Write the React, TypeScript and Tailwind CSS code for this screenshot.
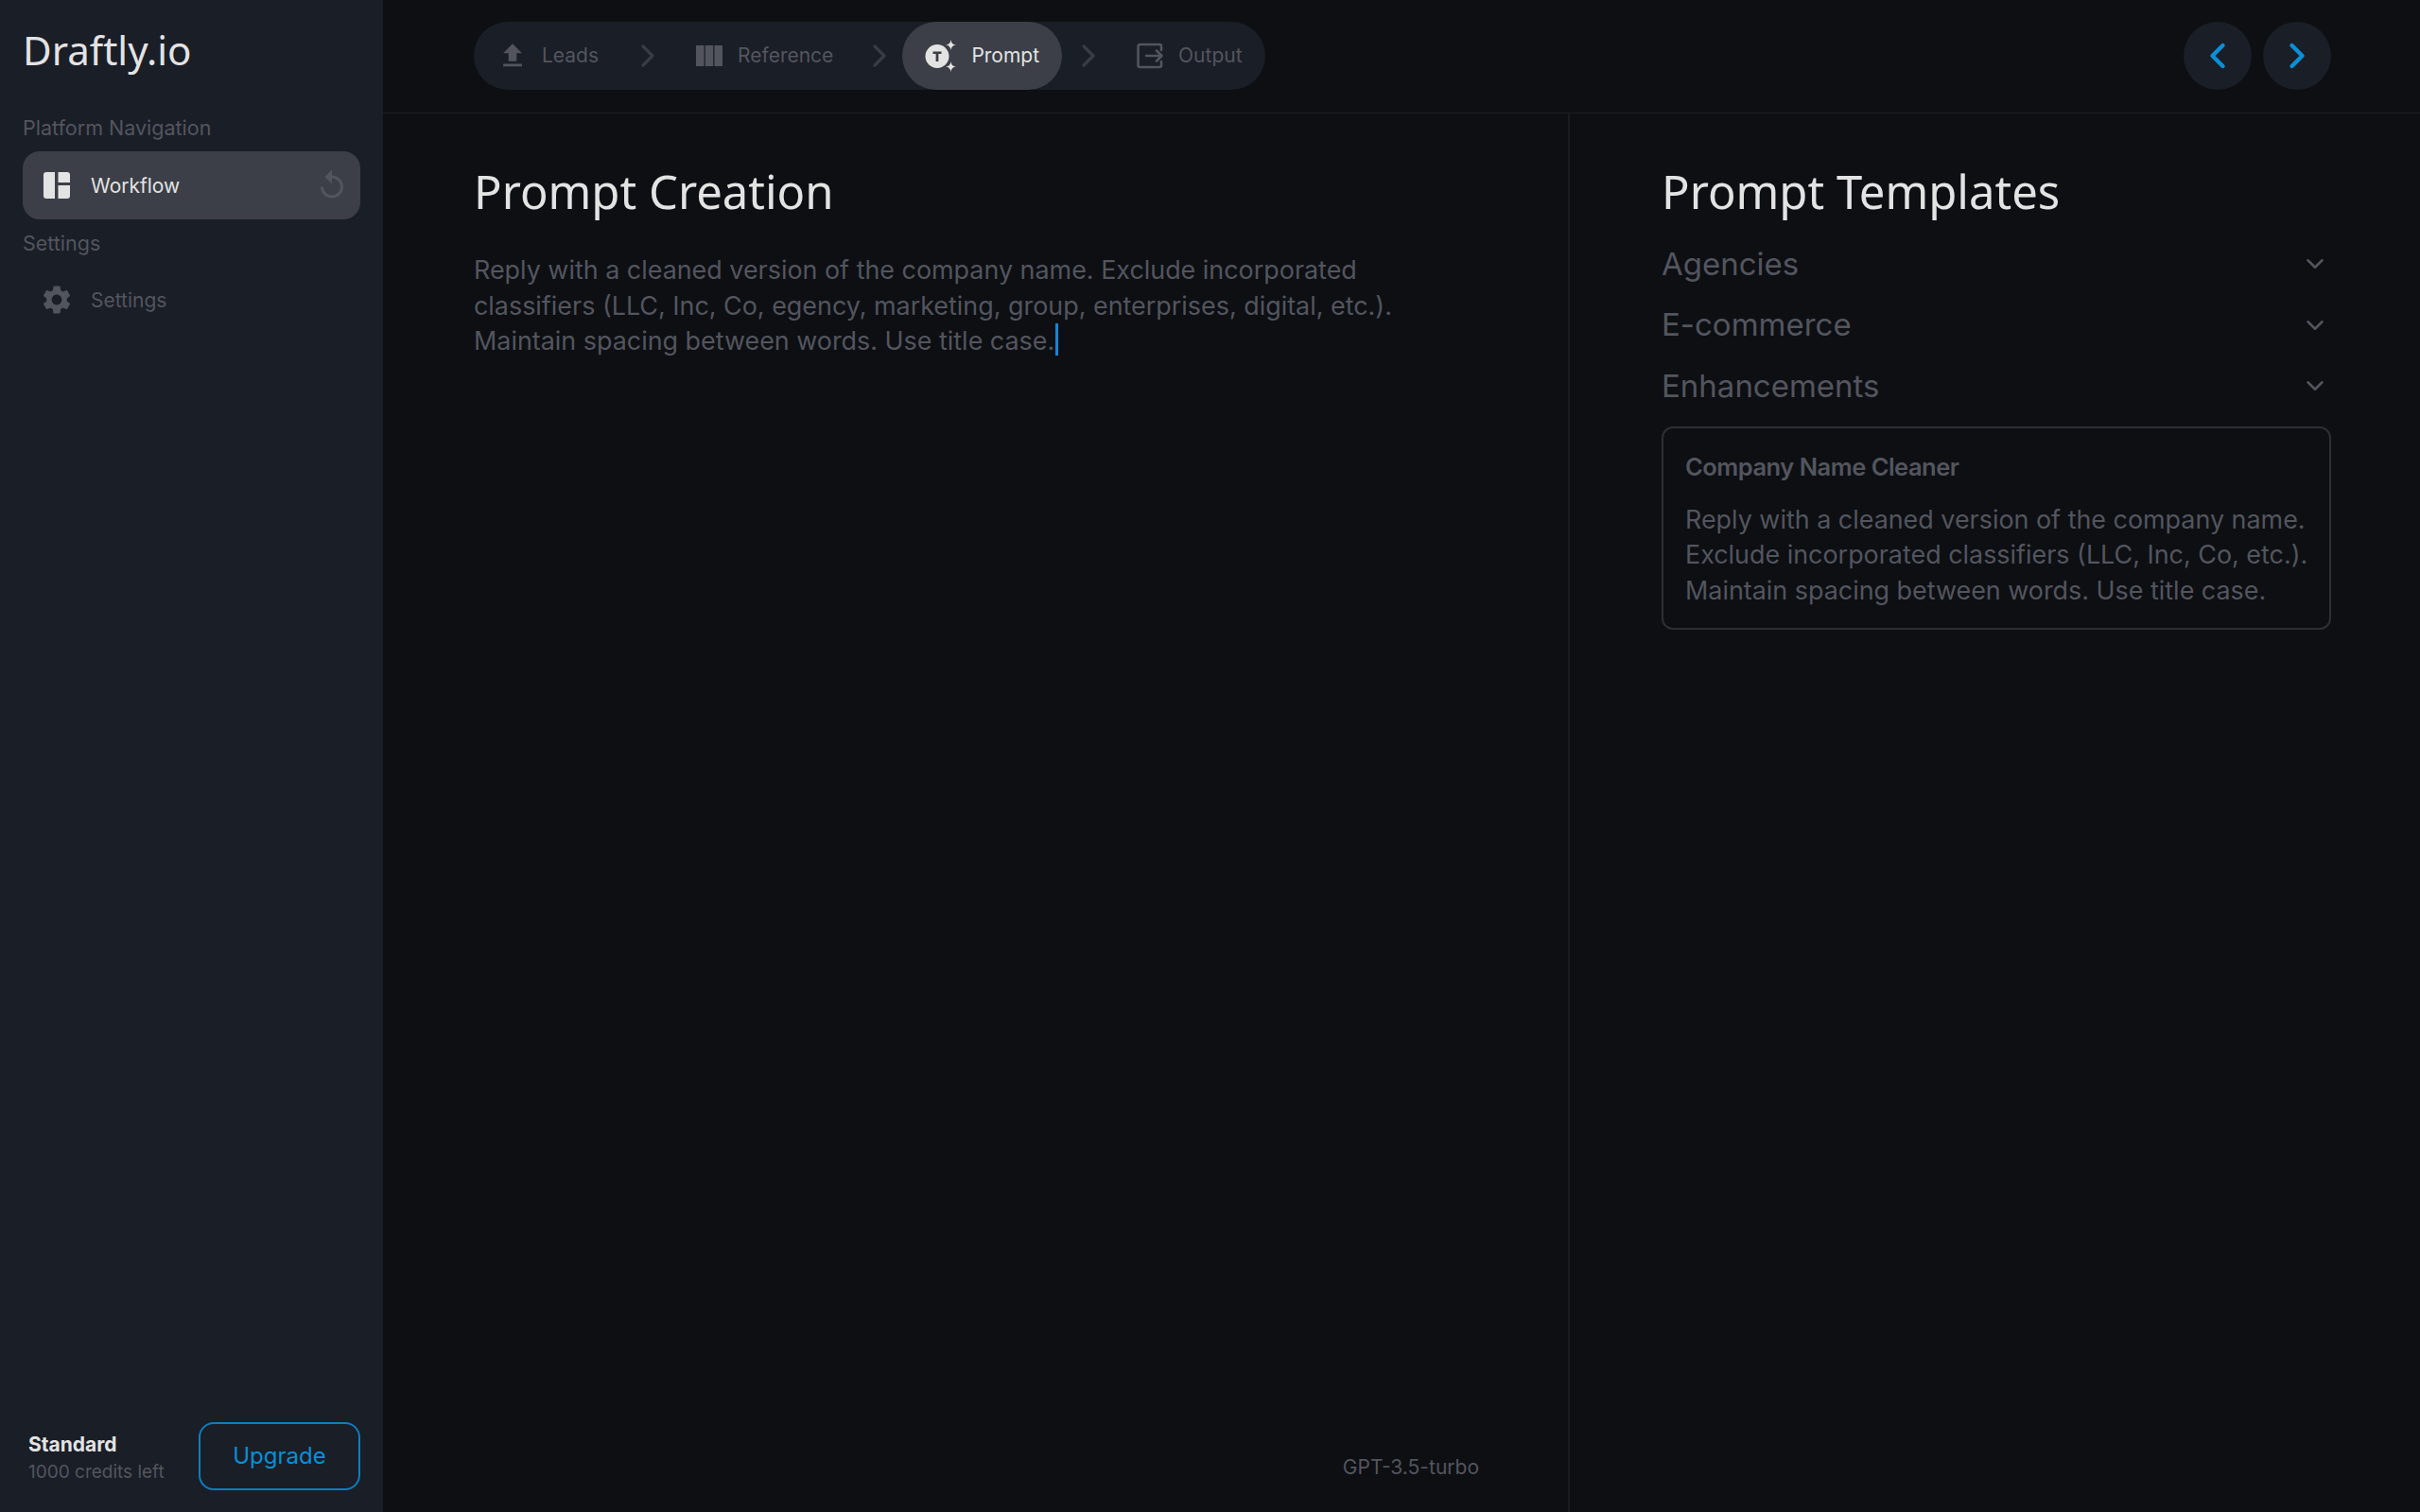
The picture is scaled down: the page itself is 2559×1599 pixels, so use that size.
import { ChevronDown, ChevronLeft, ChevronRight } from 'lucide-react'
import type { ReactNode } from 'react'

const INTER = "font-['Inter',sans-serif]"
const NOTO = "font-['Noto_Sans',sans-serif]"

function UploadIcon() {
  return (
    <svg viewBox="0 0 24 24" className="-mr-[2px] h-[34px] w-[34px]" fill="currentColor">
      <path d="M9 16h6v-6h4l-7-7-7 7h4zm-4 2h14v2H5z" />
    </svg>
  )
}

function ColumnsIcon() {
  return (
    <svg viewBox="0 0 28 22" className="h-[22px] w-[28px]" fill="currentColor">
      <rect x="0" y="0" width="8.5" height="22" rx="0.5" />
      <rect x="9.75" y="0" width="8.5" height="22" rx="0.5" />
      <rect x="19.5" y="0" width="8.5" height="22" rx="0.5" />
    </svg>
  )
}

function PromptIcon() {
  return (
    <svg viewBox="0 0 36 36" className="h-[36px] w-[36px]" fill="#e3e3e3">
      <circle cx="13" cy="18.5" r="12.5" />
      <path d="M27.5 1c.6 3.6 2 5 5.5 5.500-3.500.6-4.900 2-5.500 5.500-.6-3.500-2-4.900-5.500-5.500 3.500-.5 4.900-1.900 5.500-5.500z" />
      <path d="M27.500 24c.6 3.600 2 5 5.500 5.500-3.500.6-4.900 2-5.500 5.500-.6-3.500-2-4.900-5.500-5.500 3.500-.5 4.900-1.900 5.500-5.500z" />
      <path d="M8.500 13.500h9v2.600h-3.100v8h-2.800v-8H8.500z" fill="#3c3f47" />
    </svg>
  )
}

function OutputIcon() {
  return (
    <svg viewBox="0 0 28 28" className="h-[28px] w-[28px]" fill="none" stroke="currentColor" strokeWidth="2.600" strokeLinecap="round" strokeLinejoin="round">
      <path d="M26 8V4a2 2 0 0 0-2-2H3.500a2 2 0 0 0-2 2v20a2 2 0 0 0 2 2H24a2 2 0 0 0 2-2v-4" />
      <path d="M10 14h16M21 8.500l5.500 5.500-5.500 5.500" />
    </svg>
  )
}

function DashboardIcon() {
  return (
    <svg viewBox="0 0 28 28" className="h-[28px] w-[28px]" fill="#e3e3e3">
      <path d="M3 0h9v28H3a3 3 0 0 1-3-3V3a3 3 0 0 1 3-3z" />
      <path d="M15.500 0H25a3 3 0 0 1 3 3v8H15.500z" />
      <path d="M15.500 14H28v11a3 3 0 0 1-3 3h-9.500z" />
    </svg>
  )
}

function ReplayIcon() {
  return (
    <svg viewBox="0 0 24 24" className="h-[36px] w-[36px]" fill="#53555e">
      <path d="M12 5V1L7 6l5 5V7c3.310 0 6 2.690 6 6s-2.690 6-6 6-6-2.690-6-6H4c0 4.420 3.580 8 8 8s8-3.580 8-8-3.580-8-8-8z" />
    </svg>
  )
}

function GearIcon() {
  return (
    <svg viewBox="0 0 24 24" className="h-[36px] w-[36px]" fill="#53555e">
      <path d="M19.140 12.940c.04-.3.060-.61.060-.94 0-.32-.02-.64-.07-.94l2.030-1.580c.18-.14.230-.41.120-.61l-1.920-3.320c-.12-.22-.37-.29-.59-.22l-2.390.96c-.5-.38-1.030-.7-1.620-.94l-.36-2.540c-.04-.24-.24-.41-.48-.41h-3.840c-.24 0-.43.170-.47.410l-.36 2.540c-.59.240-1.130.570-1.620.940l-2.390-.96c-.22-.08-.47 0-.59.220L2.740 8.870c-.12.210-.08.470.12.610l2.030 1.580c-.05.300-.09.630-.09.940s.02.640.07.940l-2.030 1.580c-.18.140-.23.410-.12.610l1.920 3.320c.12.220.37.290.59.220l2.390-.96c.5.380 1.030.7 1.620.94l.36 2.540c.05.240.24.410.48.410h3.840c.24 0 .44-.17.470-.41l.36-2.540c.59-.24 1.130-.56 1.620-.94l2.390.96c.22.080.47 0 .59-.22l1.920-3.320c.12-.22.070-.47-.12-.61l-2.010-1.580zM12 15.600c-1.980 0-3.600-1.620-3.600-3.600s1.620-3.600 3.600-3.600 3.600 1.620 3.600 3.600-1.620 3.600-3.600 3.600z" />
    </svg>
  )
}

function Step({ icon, label, active }: { icon: ReactNode; label: string; active?: boolean }) {
  return (
    <div
      className={
        active
          ? 'flex h-full items-center gap-[13px] rounded-full bg-[#3c3f47] px-6 text-[#e3e3e3]'
          : 'flex h-full items-center gap-4 rounded-full px-6 text-[#53555e]'
      }
    >
      {icon}
      <span className="pt-[1px] text-[21px]">{label}</span>
    </div>
  )
}

function StepArrow({ wide }: { wide?: boolean }) {
  return (
    <div className={wide ? 'flex w-[55px] items-center justify-center' : 'flex w-[49px] items-center justify-center'}>
      <ChevronRight size={40} strokeWidth={2} className="text-[#393c44]" />
    </div>
  )
}

function NavButton({ children }: { children: ReactNode }) {
  return <button className="flex h-[72px] w-[72px] items-center justify-center rounded-full bg-[#1a1e27] text-[#0b8fd6]">{children}</button>
}

function Category({ name }: { name: string }) {
  return (
    <div className="flex h-[64.500px] items-center justify-between text-[#53555e]">
      <span className="text-[33px]">{name}</span>
      <ChevronDown size={30} strokeWidth={2} className="mr-[2px]" />
    </div>
  )
}

export default function App() {
  return (
    <div className={`flex h-[1599px] w-[2559px] overflow-hidden bg-[#0d0f13] ${INTER}`}>
      {/* Sidebar */}
      <aside className="flex w-[405px] shrink-0 flex-col justify-between bg-[#1a1e27] px-6 pb-[23px]">
        <div>
          <div className={`pt-[22px] text-[42px] leading-[62px] text-[#e3e3e3] ${NOTO}`}>Draftly.io</div>
          <div className="mt-[35px] text-[21.500px] leading-8 text-[#53555e]">Platform Navigation</div>
          <div className="mt-[9px] flex h-[72px] items-center justify-between rounded-[18px] bg-[#3c3f47] pl-[22px] pr-[12px]">
            <div className="flex items-center gap-[22px]">
              <DashboardIcon />
              <span className="pt-[1px] text-[21px] text-[#e3e3e3]">Workflow</span>
            </div>
            <ReplayIcon />
          </div>
          <div className="mt-[9px] text-[21.500px] leading-8 text-[#53555e]">Settings</div>
          <div className="mt-[8px] flex h-[72px] items-center gap-[18px] pl-[18px]">
            <GearIcon />
            <span className="pt-[1px] text-[21px] text-[#53555e]">Settings</span>
          </div>
        </div>
        <div className="flex items-center justify-between">
          <div className="pl-[6px] pt-[2px]">
            <div className="text-[21px] font-bold leading-7 text-[#e3e3e3]">Standard</div>
            <div className="mt-[3px] text-[19px] leading-6 text-[#53555e]">1000 credits left</div>
          </div>
          <button className="flex h-[72px] w-[171px] items-center justify-center rounded-[16px] border-2 border-[#0b7fc0] text-[24px] text-[#0b8fd6]">
            Upgrade
          </button>
        </div>
      </aside>

      <main className="flex min-w-0 flex-1 flex-col">
        {/* Workflow steps */}
        <header className="flex h-[120px] shrink-0 items-center justify-between border-b border-[#1d1f24] pb-[2px] pl-[96px] pr-[94px]">
          <div className="flex h-[72px] items-center rounded-full bg-[#1a1e27]">
            <Step icon={<UploadIcon />} label="Leads" />
            <StepArrow wide />
            <Step icon={<ColumnsIcon />} label="Reference" />
            <StepArrow />
            <Step icon={<PromptIcon />} label="Prompt" active />
            <StepArrow wide />
            <Step icon={<OutputIcon />} label="Output" />
          </div>
          <div className="flex gap-3">
            <NavButton><ChevronLeft size={44} strokeWidth={2.400} /></NavButton>
            <NavButton><ChevronRight size={44} strokeWidth={2.400} /></NavButton>
          </div>
        </header>

        <div className="flex min-h-0 flex-1">
          {/* Prompt editor */}
          <section className="flex w-[1255px] shrink-0 flex-col justify-between border-r-2 border-[#1a1c21] pl-[96px] pr-[94px]">
            <div>
              <h1 className={`pt-[45px] text-[49px] leading-[74px] text-[#e3e3e3] ${NOTO}`}>Prompt Creation</h1>
              <p className="mt-[28px] w-[985px] text-[26.900px] leading-[37.500px] text-[#53555e]">
                Reply with a cleaned version of the company name. Exclude incorporated classifiers (LLC, Inc, Co, egency, marketing, group, enterprises, digital, etc.). Maintain spacing between words. Use title case.
                <span className="ml-[1px] inline-block h-[34px] w-[3px] bg-[#1685d8] align-[-6px]" />
              </p>
            </div>
            <div className="pb-[31px] text-right text-[21px] leading-8 text-[#53555e]">GPT-3.5-turbo</div>
          </section>

          {/* Templates */}
          <section className="flex-1 pl-[97px] pr-[94px]">
            <h2 className={`pt-[45px] text-[49px] leading-[74px] text-[#e3e3e3] ${NOTO}`}>Prompt Templates</h2>
            <div className="mt-[8px]">
              <Category name="Agencies" />
              <Category name="E-commerce" />
              <Category name="Enhancements" />
            </div>
            <div className="mt-[10px] rounded-xl border-2 border-[#2c2f36] pb-[21px] pl-[23px] pr-[14px] pt-[25px]">
              <div className="text-[25.500px] font-semibold leading-8 tracking-[-0.5px] text-[#53555e]">Company Name Cleaner</div>
              <p className="mt-[21px] text-[26.900px] leading-[37.500px] text-[#53555e]">
                Reply with a cleaned version of the company name. Exclude incorporated classifiers (LLC, Inc, Co, etc.). Maintain spacing between words. Use title case.
              </p>
            </div>
          </section>
        </div>
      </main>
    </div>
  )
}
